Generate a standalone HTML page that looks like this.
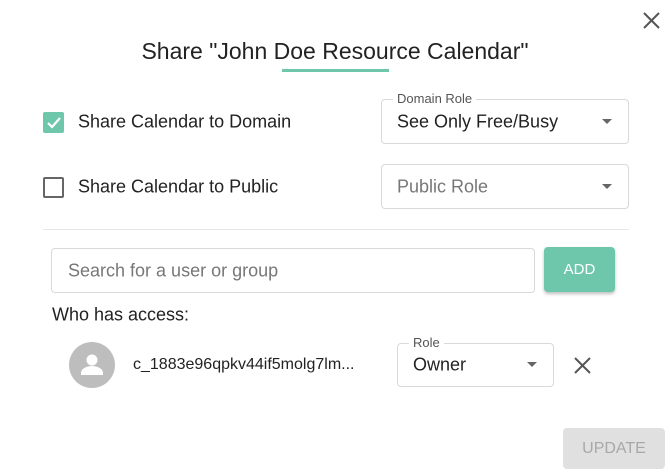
<!DOCTYPE html>
<html><head><style>
*{box-sizing:border-box;margin:0;padding:0}
body{width:670px;height:475px;background:#fff;font-family:"Liberation Sans",sans-serif;color:#222;position:relative;overflow:hidden}
.a{position:absolute}
.sel{position:absolute;border:1px solid #d9d9d9;border-radius:4px}
.sel .v{position:absolute;left:15px;top:50%;transform:translateY(-50%);font-size:18px;white-space:nowrap}
.sel .arr{position:absolute;right:16px;top:50%;margin-top:-3px;width:0;height:0;border-left:5px solid transparent;border-right:5px solid transparent;border-top:5px solid #666}
.lg{position:absolute;top:-8px;left:11px;background:#fff;padding:0 4px;font-size:13px;color:#555;line-height:14px}
.lbl{font-size:18px;white-space:nowrap;transform:translateY(-50%)}
</style></head><body>
<svg class="a" style="left:643px;top:12px" width="17" height="17" viewBox="0 0 17 17"><path d="M1 1L16 16M16 1L1 16" stroke="#555" stroke-width="2"/></svg>
<div class="a" style="left:0;width:670px;top:38px;text-align:center;font-size:23px;line-height:26px">Share "John Doe Resource Calendar"</div>
<div class="a" style="left:282px;top:69px;width:107px;height:3px;background:#6ec6ab"></div>

<div class="a" style="left:43px;top:112px;width:21px;height:21px;background:#6ec6ab;border-radius:2px"></div>
<svg class="a" style="left:43px;top:112px" width="21" height="21" viewBox="0 0 21 21"><path d="M5 11l4 4 8-9" stroke="#fff" stroke-width="2.2" fill="none"/></svg>
<div class="a lbl" style="left:78px;top:122px">Share Calendar to Domain</div>
<div class="sel" style="left:381px;top:99px;width:248px;height:45px"><div class="lg">Domain Role</div><div class="v">See Only Free/Busy</div><div class="arr"></div></div>

<div class="a" style="left:43px;top:177px;width:21px;height:21px;border:2px solid #666;border-radius:2px"></div>
<div class="a lbl" style="left:78px;top:187px">Share Calendar to Public</div>
<div class="sel" style="left:381px;top:164px;width:248px;height:45px"><div class="v" style="color:#777">Public Role</div><div class="arr"></div></div>

<div class="a" style="left:43px;top:229px;width:586px;height:1px;background:#e6e6e6"></div>

<div class="sel" style="left:51px;top:248px;width:484px;height:45px"><div class="v" style="left:16px;color:#777">Search for a user or group</div></div>
<div class="a" style="left:544px;top:247px;width:71px;height:45px;background:#6ec6ab;border-radius:4px;box-shadow:0 2px 3px rgba(0,0,0,.25);color:#fff;font-size:15px;text-align:center;line-height:45px">ADD</div>

<div class="a lbl" style="left:52px;top:315px">Who has access:</div>
<div class="a" style="left:69px;top:342px;width:46px;height:46px;border-radius:50%;background:#bdbdbd"></div>
<svg class="a" style="left:69px;top:342px" width="46" height="46" viewBox="0 0 46 46"><circle cx="23" cy="18" r="5.5" fill="#fff"/><path d="M12 31c0-5 7-7 11-7s11 2 11 7v2H12z" fill="#fff"/></svg>
<div class="a lbl" style="left:133px;top:365px;font-size:16px">c_1883e96qpkv44if5molg7lm...</div>
<div class="sel" style="left:397px;top:343px;width:157px;height:44px"><div class="lg">Role</div><div class="v">Owner</div><div class="arr"></div></div>
<svg class="a" style="left:574px;top:357px" width="17" height="17" viewBox="0 0 17 17"><path d="M1 1L16 16M16 1L1 16" stroke="#555" stroke-width="2"/></svg>

<div class="a" style="left:563px;top:428px;width:102px;height:41px;background:#e0e0e0;border-radius:4px;color:#a8a8a8;font-size:16px;text-align:center;line-height:41px">UPDATE</div>
</body></html>
